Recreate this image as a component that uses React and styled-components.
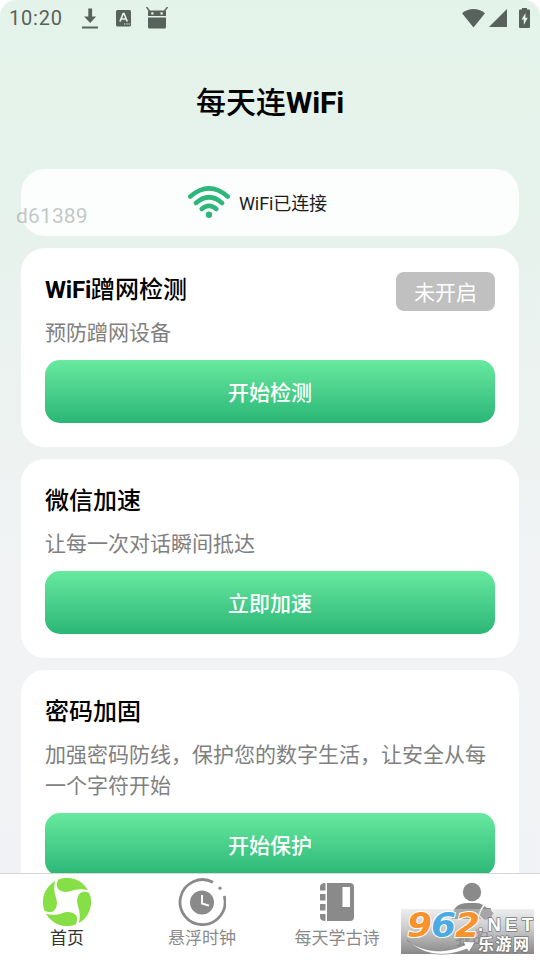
import React from 'react';
import styled, { createGlobalStyle } from 'styled-components';

const GlobalStyle = createGlobalStyle`
  * { box-sizing: border-box; }
  body {
    margin: 0;
    background: #fff;
    font-family: Roboto, "Noto Sans CJK SC", sans-serif;
  }
`;

const Screen = styled.div`
  position: relative;
  display: flex;
  flex-direction: column;
  width: 540px;
  height: 960px;
  overflow: hidden;
  border-radius: 16px 16px 0 0;
  background: linear-gradient(#e3f3ea 0, #e6f2ec 200px, #f1f3f4 560px, #f1f2f5 100%);
`;

const StatusBar = styled.header`
  display: flex;
  align-items: center;
  height: 37px;
  padding: 0 10px 1px 9px;
  color: #58625c;
  font-size: 20px;
  letter-spacing: 0.8px;
  svg { display: block; }
`;

const StatusIcons = styled.div`
  display: flex;
  align-items: center;
  margin-left: ${({ $push }) => ($push ? 'auto' : '19px')};
  svg + svg { margin-left: ${({ $push }) => ($push ? '4px' : '18px')}; }
  svg:last-child { margin-left: ${({ $push }) => ($push ? '12px' : '15px')}; }
`;

const PageTitle = styled.h1`
  margin: 0;
  height: 132px;
  line-height: 131px;
  font-size: 30px;
  font-weight: 500;
  text-align: center;
  color: #000;
  span { font-weight: 700; letter-spacing: -0.2px; }
`;

const Content = styled.main`
  flex: 1;
  min-height: 0;
  overflow: hidden;
  display: flex;
  flex-direction: column;
  gap: 12px;
  padding: 0 21px;
`;

const Connection = styled.div`
  flex: none;
  display: flex;
  align-items: center;
  height: 67px;
  padding: 0 0 2px 166px;
  gap: 8px;
  border-radius: 24px;
  background: #fbfefd;
  font-size: 18px;
  letter-spacing: -0.1px;
  color: #1c1c1c;
`;

const Card = styled.section`
  flex: none;
  padding: 24px;
  border-radius: 24px;
  background: #fff;
`;

const CardHead = styled.div`
  display: flex;
  justify-content: space-between;
  align-items: flex-start;
  height: 46px;
`;

const CardTitle = styled.h2`
  margin: 0;
  line-height: 37px;
  font-size: 24px;
  font-weight: 500;
  color: #000;
  span { font-weight: 700; letter-spacing: -0.2px; }
`;

const Badge = styled.span`
  width: 99px;
  height: 39px;
  line-height: 43px;
  border-radius: 8px;
  background: #c0c0c0;
  color: #fff;
  font-size: 21px;
  text-align: center;
`;

const Description = styled.p`
  margin: 0 0 11px;
  line-height: 31px;
  font-size: 21px;
  color: #808080;
`;

const Button = styled.button`
  display: block;
  width: 100%;
  height: 63px;
  padding: 0 0 2px;
  border: 0;
  border-radius: 15px;
  background: linear-gradient(#67e99f, #2bb676);
  color: #fff;
  font: 500 21px Roboto, "Noto Sans CJK SC", sans-serif;
`;

const TabBar = styled.nav`
  flex: none;
  display: grid;
  grid-template-columns: repeat(4, 135px);
  height: 87px;
  border-top: 1px solid #d5d6d6;
  background: #fff;
`;

const Tab = styled.div`
  display: flex;
  flex-direction: column;
  align-items: center;
  padding: 4px 1px 0 0;
  font-size: 17px;
  line-height: 24px;
  color: ${({ $active }) => ($active ? '#333' : '#8a8a8a')};
  svg { display: block; }
`;

const DeviceTag = styled.span`
  position: absolute;
  left: 16px;
  top: 204px;
  font-size: 21px;
  line-height: 25px;
  letter-spacing: 0.15px;
  color: rgba(140, 145, 142, 0.5);
`;

const SiteMark = styled.div`
  position: absolute;
  left: 401px;
  top: 909px;
  width: 133px;
  height: 45px;
  background: linear-gradient(rgba(215, 215, 215, 0.4), rgba(165, 165, 165, 0.6) 45%, rgba(115, 115, 115, 0.85));
  svg { display: block; overflow: visible; }
`;

const DownloadIcon = () => (
  <svg width="16" height="21" viewBox="0 0 16 21" fill="currentColor">
    <path d="M6.300 0.500h3.800v8h4L8.200 15 2 8.500h4.300zM0 18.500h16v2H0z" />
  </svg>
);

const LanguageIcon = () => (
  <svg width="15" height="17" viewBox="0 0 15 17">
    <rect width="15" height="16.500" rx="1.500" fill="currentColor" />
    <path d="M4 11.500 7.200 3.500h.8L11.200 11.500M5.200 9h4.800" fill="none" stroke="#e3f3ea" strokeWidth="1.700" />
    <path d="M8 14h1.300M10.400 14h1.300M12.600 14h1.300" stroke="#e3f3ea" strokeWidth="1.200" />
  </svg>
);

const RobotIcon = () => (
  <svg width="22" height="22" viewBox="0 0 22 22" fill="currentColor">
    <path d="M.5 0 3.500 4M21.500 0 18.500 4" stroke="currentColor" strokeWidth="1.400" />
    <path fillRule="evenodd" d="M2 9V4.500Q2 3.500 3.500 3.500h15q1.500 0 1.500 1V9zM5.300 5.200h2.200v2.200H5.300zM14.500 5.200h2.200v2.200h-2.200z" />
    <path d="M2 10.500h18V20q0 1.500-1.500 1.500h-15Q2 21.500 2 20z" />
  </svg>
);

const SignalIcons = () => (
  <>
    <svg width="23" height="19" viewBox="0 0 23 19" fill="currentColor">
      <path d="M0 4.200Q11.500-4 23 4.200L11.500 18.500z" />
    </svg>
    <svg width="18" height="18" viewBox="0 0 18 18" fill="currentColor">
      <path d="M18 0v18H0z" />
    </svg>
    <svg width="11" height="20" viewBox="0 0 11 20">
      <path d="M3 0h5v1.500h2q1 0 1 1V19q0 1-1 1H1q-1 0-1-1V2.500q0-1 1-1h2z" fill="currentColor" />
      <path d="M6.500 5 2.500 11.500h2.300V17L8.700 9.800H6.400z" fill="#e3f3ea" />
    </svg>
  </>
);

const WifiIcon = () => (
  <svg width="44" height="34" viewBox="0 0 44 34" fill="none" stroke="#2eb67b" strokeWidth="4.600" strokeLinecap="round">
    <path d="M3.300 11.500Q22-4.800 40.700 11.500M9 18Q22 6.500 35 18M14.800 24Q22 17.800 29.200 24" />
    <circle cx="22" cy="29.800" r="3.200" fill="#2eb67b" stroke="none" />
  </svg>
);

// one blade, repeated around the centre
const HomeIcon = () => (
  <svg width="48" height="48" viewBox="0 0 48 48" fill="#86df45">
    {[0, 90, 180, 270].map((turn) => (
      <path
        key={turn}
        transform={`rotate(${turn} 24 24)`}
        d="M15.300 1.600A24 24 0 0 1 45 12.200C40 10.800 34 11 29 12.800C24 14.600 18.500 14.200 15.500 11.200C13 8.500 13.600 5 15.300 1.600Z"
      />
    ))}
  </svg>
);

const ClockIcon = () => (
  <svg width="48" height="48" viewBox="0 0 48 48" fill="none">
    <path d="M35 4.200A22.500 22.500 0 1 0 46.200 18" stroke="#8a8a8a" strokeWidth="2.800" />
    <circle cx="42" cy="10.200" r="1.600" fill="#8a8a8a" />
    <circle cx="24" cy="24.500" r="12" fill="#8a8a8a" />
    <path d="M24 17v8.500l7 2.200" stroke="#fff" strokeWidth="1.900" />
  </svg>
);

const BookIcon = () => (
  <svg width="48" height="48" viewBox="0 0 48 48" fill="#8a8a8a">
    <path fillRule="evenodd" d="M14 5h23q4 0 4 4v30q0 4-4 4H14zM29.500 9v20H37V9z" />
    <path d="M12.500 5v7.500H7V9q0-4 5.500-4zM7 16h5.500v6.500H7zM7 26h5.500v6.500H7zM7 36h5.500v7Q7 43 7 39z" />
  </svg>
);

const UserIcon = () => (
  <svg width="48" height="48" viewBox="0 0 48 48" fill="#8a8a8a">
    <circle cx="24" cy="14" r="9.200" />
    <path d="M4 41Q4 25 20 25h8q5 0 8 3l7 9v4z" />
    <path d="m36 27 3.200 2.300 4-.2 1 3.800 2.400 2.100-2 2.600.2 4-8.800 1-5-5 1.800-5.600z" stroke="#fff" strokeWidth="1.500" />
  </svg>
);

const SiteLogo = () => (
  <svg width="133" height="45" viewBox="0 0 133 45">
    <path d="M6 31Q31 50 64 36L62 32.500l12 .500-6 10-2-3Q30 54 6 31z" fill="#fff" stroke="#777" strokeWidth=".6" />
    <g fontWeight="700" paintOrder="stroke" strokeLinejoin="round">
      <g fontSize="33" fontFamily="DejaVu Sans, sans-serif" fontStyle="italic" stroke="#fff" strokeWidth="2">
        <text x="6" y="28" textLength="25" lengthAdjust="spacingAndGlyphs" fill="#f9922b">9</text>
        <text x="30" y="28" textLength="25" lengthAdjust="spacingAndGlyphs" fill="#4dabe3">6</text>
        <text x="54" y="28" textLength="25" lengthAdjust="spacingAndGlyphs" fill="#f9922b">2</text>
      </g>
      <text x="77" y="22" fontSize="18.500" fontFamily="Liberation Sans, sans-serif" textLength="55" fill="#fff" stroke="#777" strokeWidth="1.500">.NET</text>
      <text x="77" y="41" fontSize="16" fontFamily="Noto Sans CJK SC, sans-serif" textLength="51" fill="#fff" stroke="#777" strokeWidth="1.500">乐游网</text>
    </g>
  </svg>
);

const cards = [
  { title: '蹭网检测', latin: 'WiFi', badge: '未开启', text: '预防蹭网设备', action: '开始检测' },
  { title: '微信加速', text: '让每一次对话瞬间抵达', action: '立即加速' },
  { title: '密码加固', text: '加强密码防线，保护您的数字生活，让安全从每一个字符开始', action: '开始保护' },
];

const tabs = [
  { label: '首页', Icon: HomeIcon, active: true },
  { label: '悬浮时钟', Icon: ClockIcon },
  { label: '每天学古诗', Icon: BookIcon },
  { label: '我的', Icon: UserIcon },
];

const App = () => (
  <>
    <GlobalStyle />
    <Screen>
      <StatusBar>
        10:20
        <StatusIcons>
          <DownloadIcon />
          <LanguageIcon />
          <RobotIcon />
        </StatusIcons>
        <StatusIcons $push>
          <SignalIcons />
        </StatusIcons>
      </StatusBar>
      <PageTitle>每天连<span>WiFi</span></PageTitle>
      <Content>
        <Connection>
          <WifiIcon />
          WiFi已连接
        </Connection>
        {cards.map(({ title, latin, badge, text, action }) => (
          <Card key={title}>
            <CardHead>
              <CardTitle>{latin && <span>{latin}</span>}{title}</CardTitle>
              {badge && <Badge>{badge}</Badge>}
            </CardHead>
            <Description>{text}</Description>
            <Button>{action}</Button>
          </Card>
        ))}
      </Content>
      <TabBar>
        {tabs.map(({ label, Icon, active }) => (
          <Tab key={label} $active={active}>
            <Icon />
            {label}
          </Tab>
        ))}
      </TabBar>
      <DeviceTag>d61389</DeviceTag>
      <SiteMark><SiteLogo /></SiteMark>
    </Screen>
  </>
);

export default App;
